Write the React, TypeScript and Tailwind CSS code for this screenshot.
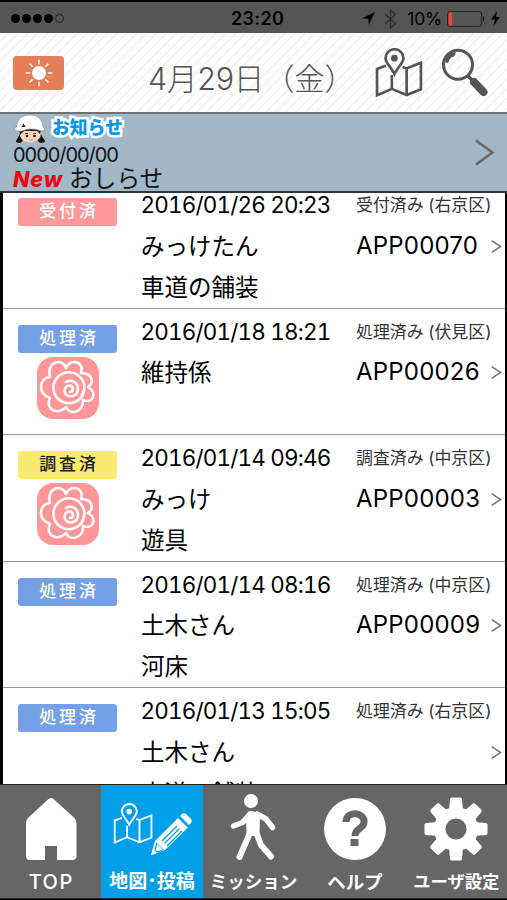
import React from 'react';

type Row = {
  tag: string;
  tone: 'pink' | 'blue' | 'yellow';
  date: string;
  name: string;
  kind?: string;
  state: string;
  code?: string;
  flower?: boolean;
};

const rows: Row[] = [
  { tag: '受付済', tone: 'pink', date: '2016/01/26 20:23', name: 'みっけたん', kind: '車道の舗装', state: '受付済み (右京区)', code: 'APP00070' },
  { tag: '処理済', tone: 'blue', date: '2016/01/18 18:21', name: '維持係', state: '処理済み (伏見区)', code: 'APP00026', flower: true },
  { tag: '調査済', tone: 'yellow', date: '2016/01/14 09:46', name: 'みっけ', kind: '遊具', state: '調査済み (中京区)', code: 'APP00003', flower: true },
  { tag: '処理済', tone: 'blue', date: '2016/01/14 08:16', name: '土木さん', kind: '河床', state: '処理済み (中京区)', code: 'APP00009' },
  { tag: '処理済', tone: 'blue', date: '2016/01/13 15:05', name: '土木さん', kind: '車道の舗装', state: '処理済み (右京区)' },
];

const tones = {
  pink: 'bg-[#ff999b] text-white',
  blue: 'bg-[#74a0e6] text-white',
  yellow: 'bg-[#f9ea70] text-[#222]',
};

function StatusBar() {
  return (
    <div className="flex h-[33px] shrink-0 items-center border-t-2 border-black bg-[#555] pl-[11px] pr-[7px] pt-[2px] text-black">
      <div className="flex w-[220px] gap-[2px]">
        {[0, 1, 2, 3].map((i) => (
          <span key={i} className="size-[9px] rounded-full bg-black" />
        ))}
        <span className="size-[9px] rounded-full border border-[#222]" />
      </div>
      <span className="text-[18px] font-semibold leading-[20px] tracking-[0.35px]">23:20</span>
      <div className="ml-auto flex items-center">
        <svg width="13" height="13" viewBox="0 0 13 13">
          <path d="M13 0 6.8 13 6.3 6.8 0 6.2Z" fill="#000" />
        </svg>
        <svg className="ml-[9px]" width="13" height="20" viewBox="0 0 13 20">
          <path d="M1 5 11.5 14.5 6.5 19V1L11.5 5.5 1 15" fill="none" stroke="#2c2c2c" strokeWidth="1.2" />
        </svg>
        <span className="ml-[10px] text-[17.500px] leading-[20px] tracking-[-0.2px]">10%</span>
        <svg className="ml-[5px]" width="39" height="16" viewBox="0 0 39 16">
          <rect x=".6" y=".6" width="34" height="14.8" rx="2.5" fill="none" stroke="#222" />
          <rect x="1.600" y="1.600" width="3.600" height="12.800" rx="1" fill="#f0453a" />
          <path d="M36 5q2.500 3 0 6Z" fill="#000" />
        </svg>
        <svg className="ml-[5px]" width="9" height="15" viewBox="0 0 9 15">
          <path d="M6 0 0 8.500h4L2.500 15 9 6H5Z" fill="#000" />
        </svg>
      </div>
    </div>
  );
}

function MapIcon({ className, width }: { className?: string; width: number }) {
  return (
    <svg className={className} viewBox="0 0 48 48" fill="none" stroke="currentColor" strokeWidth={width}>
      <path d="M10.500 17.500 2 20.500v25.800L16.500 40 31 46l14-5.500V14.500L31 20l-4-1.500M31 20v26M16.500 26.500V40" />
      <path d="M19 25.500C16 19 10.300 14.500 10.300 10a8.800 8.800 0 0 1 17.600 0c0 4.500-5.900 9-8.900 15.500Z" />
      <circle cx="19" cy="10" r="3.300" fill="currentColor" stroke="none" />
    </svg>
  );
}

function Header() {
  return (
    <header className="flex h-[79px] shrink-0 items-start bg-[repeating-linear-gradient(135deg,#fff_0px,#fff_5px,#f1f1f1_5.500px,#f1f1f1_6.300px,#fff_7px)] pl-[13px] text-[#555]">
      <div className="mt-[23px] flex h-[34px] w-[51px] items-center justify-center rounded-[4px] bg-[#e47e58]">
        <svg width="28" height="28" viewBox="-14 -14 28 28" stroke="#fff" strokeWidth="1.500">
          <circle r="7" fill="#fff" stroke="none" />
          {[0, 45, 90, 135, 180, 225, 270, 315].map((a) => (
            <path key={a} d="M0-8.800V-13.200" transform={`rotate(${a})`} />
          ))}
        </svg>
      </div>
      <h1 className="ml-[84px] mt-[24px] w-[213px] whitespace-nowrap text-[30.500px] font-light leading-[44px] tracking-[-0.250px]">4月29日（金）</h1>
      <MapIcon className="ml-[14px] mt-[15px] size-[49px]" width={2.6} />
      <svg className="ml-[17px] mt-[15px]" width="48" height="49" viewBox="0 0 48 49">
        <circle cx="17" cy="16.800" r="14.500" fill="none" stroke="#555" strokeWidth="3" />
        <path d="M4 14Q6 5 15 4q-1 5-5 5.500Q8 12 7 15Z" fill="#555" />
        <path d="m27 28 5 5" stroke="#555" strokeWidth="3.500" />
        <path d="m33 34 9.500 10" stroke="#555" strokeWidth="8" strokeLinecap="round" />
      </svg>
    </header>
  );
}

function Helmet() {
  return (
    <svg width="34" height="30" viewBox="0 0 34 30">
      <path d="M8 16C6 24 3 25 3 28q6 3 7-3ZM27 16c1 8 5 8 5 12q-7 3-8-4Z" fill="#191716" />
      <path d="M7 15h20q3 9-4 12-6 3-12 0-6-4-4-12Z" fill="#fbd7bb" />
      <path d="M6 15h22l-1 5-3-3H11l-4 4Z" fill="#30231d" />
      <path d="M12 19.500h3M20 19.500h3" stroke="#543" strokeWidth="1" />
      <circle cx="14" cy="22" r="1.300" fill="#211" />
      <circle cx="21.500" cy="22" r="1.300" fill="#211" />
      <path d="M16 25.500q2 1 4 0" stroke="#b66" strokeWidth=".8" fill="none" />
      <path d="M1 15Q4 14 4 10 6 1 17 1q12 0 13 12l2 3-4 1q-10-4-19 0-5 1-8-2Z" fill="#fff" stroke="#777" strokeWidth=".5" />
      <path d="m10.500 9.500-2 3.500h4Z" fill="#222" />
    </svg>
  );
}

function Notice() {
  return (
    <section className="flex h-[81px] shrink-0 items-center justify-between border-b-2 border-t-2 border-b-[#303338] border-t-[#6f7275] bg-[#a2b8c7] pr-[12px]">
      <div className="flex h-full flex-col pl-[13px] text-[#101418]">
        <div className="flex h-[29.500px] items-start">
          <Helmet />
          <strong className="ml-[5px] text-[17.800px] font-black leading-[27px] text-[#0798e8] [paint-order:stroke_fill] [-webkit-text-stroke:5px_white]">お知らせ</strong>
        </div>
        <span className="text-[20px] leading-[22px] tracking-[-1.050px]">0000/00/00</span>
        <div className="flex items-baseline whitespace-nowrap leading-[26px]">
          <b className="w-[50px] text-[21.500px] font-extrabold italic tracking-[0.900px] text-[#f00612]">New</b>
          <span className="ml-[6px] text-[23.700px]">おしらせ</span>
        </div>
      </div>
      <svg width="20" height="27" viewBox="0 0 20 27" fill="none" stroke="#666" strokeWidth="2.500">
        <path d="m1 1.500 16.500 12L1 25.500" />
      </svg>
    </section>
  );
}

function Flower() {
  return (
    <svg className="ml-[19px] mt-[4px]" width="62" height="62" viewBox="0 0 62 62" fill="none" stroke="#fff" strokeWidth="2.500" strokeLinecap="round" strokeLinejoin="round">
      <rect width="62" height="62" rx="16" fill="#ff9799" stroke="none" />
      <path d="M13 20C9 5 25 0 29 11 33 1 48 4 44 16 56 16 57 26 51 30 61 36 56 47 46 43 47 55 33 59 29 50 23 58 7 54 13 41 1 38 1 21 13 20Z" />
      <path d="M46.500 36A15.500 15.500 0 1 1 44 21C49 27 48 35 44 40" />
      <path d="M33 35C37 35 37 29 33 28.500 28 28 26 34 29 37.500 34 42 41 38 41 32 41 25 34 22 29 25" />
    </svg>
  );
}

function ListRow({ row, last }: { row: Row; last: boolean }) {
  return (
    <li className={`flex h-[126.500px] shrink-0 ${last ? '' : 'border-b border-[#999]'}`}>
      <div className="w-[138px] shrink-0 pl-[15px] pt-[16px]">
        <div className={`flex h-[28px] w-[99px] items-center justify-center rounded-[3px] pl-[3px] text-[17px] font-medium tracking-[2.800px] ${tones[row.tone]}`}>{row.tag}</div>
        {row.flower && <Flower />}
      </div>
      <div className="w-[215px] shrink-0 whitespace-nowrap pt-[3px] text-[23.500px] leading-[41px]">
        <p className="-ml-[0.500px] text-[22.500px] leading-[40.500px] tabular-nums tracking-[-0.830px]">{row.date}</p>
        <p>{row.name}</p>
        <p>{row.kind}</p>
      </div>
      <div className="flex-1 whitespace-nowrap pt-[3px] leading-[40.500px]">
        <p className="text-[16.900px] text-[#333]">{row.state}</p>
        <div className="flex h-[41px] items-center">
          <span className="w-[135px] text-[24px] tracking-[0.200px]">{row.code}</span>
          <svg width="11" height="13" viewBox="0 0 11 13" fill="none" stroke="#777" strokeWidth="1.500">
            <path d="m.7.7 9 5.800-9 5.800" />
          </svg>
        </div>
      </div>
    </li>
  );
}

const white = '#fff';

function HomeIcon() {
  return (
    <svg width="52" height="62" viewBox="0 0 52 62">
      <path d="M23.500 1q2.500-1.800 5 0L49.500 20q2 2 2 5v33q0 4-4 4H32V48H20v14H5q-4 0-4-4V25q0-3 2-5Z" fill={white} />
    </svg>
  );
}

function PencilIcon() {
  return (
    <svg width="42" height="43" viewBox="0 0 42 43">
      <path d="M1 42 5 28 28.500 4.500 38.500 14 15 37Z" fill={white} />
      <path d="m30 3 2-2q2-1.500 4 0l5 5q1.500 2 0 4l-2 2Z" fill={white} />
      <path d="M6.500 29.500 4 38l2 2 8-3Z" fill="#00a0e9" />
      <path d="M7.500 31 5.500 37.500l1.500 1 5.500-2Z" fill={white} />
      <path d="M1 42 3 36l4 4Z" fill={white} />
      <path d="m12 28 15-15M14.500 30.500l15-15M17 33l15-15M28.500 4.500l10 10" stroke="#00a0e9" strokeWidth="1.300" />
    </svg>
  );
}

function WalkIcon() {
  return (
    <svg className="mb-[3px] mr-[2px]" width="46" height="68" viewBox="0 0 46 68" fill="none" stroke={white} strokeLinecap="round" strokeLinejoin="round">
      <circle cx="21" cy="7" r="7" fill={white} stroke="none" />
      <path d="M22 20 19 23 19.500 39 26.500 39 27 22Z" fill={white} strokeWidth="6" />
      <path d="M20 20 12.500 28.500 3.500 32M27 20l9 5 6.500 8.500" strokeWidth="5.500" />
      <path d="M19.500 40 9.500 63M26.500 39 31 51 41 62.500" strokeWidth="6" />
    </svg>
  );
}

function HelpIcon() {
  return (
    <svg width="62" height="62" viewBox="0 0 62 62">
      <circle cx="31" cy="31" r="31" fill={white} />
      <path d="M22 24c0-12 19-10 18 0 0 7-9 6-9 14" fill="none" stroke="#666" strokeWidth="7" />
      <path d="M26.500 41h8v7h-8Z" fill="#666" />
    </svg>
  );
}

function GearIcon() {
  return (
    <svg width="64" height="64" viewBox="-32 -32 64 64">
      <circle r="22" fill={white} />
      {[0, 45, 90, 135, 180, 225, 270, 315].map((a) => (
        <path key={a} d="M-7-18-6-30q.2-1.500 2-1.500h8q1.800 0 2 1.500L7-18Z" fill={white} transform={`rotate(${a})`} />
      ))}
      <circle r="10.500" fill="#666" />
    </svg>
  );
}

function Tab({ label, text, active, children }: { label: string; text: string; active?: boolean; children: React.ReactNode }) {
  return (
    <button className={`flex min-w-0 flex-1 flex-col items-center ${active ? 'bg-[#00a0e9]' : ''}`}>
      <span className="flex h-[86px] items-center pt-[2px]">{children}</span>
      <span className={`whitespace-nowrap leading-[22px] ${text}`}>{label}</span>
    </button>
  );
}

export default function App() {
  return (
    <main className="flex h-[900px] w-[507px] flex-col overflow-hidden bg-black font-[Inter,'Noto_Sans_CJK_JP',sans-serif] text-black">
      <StatusBar />
      <Header />
      <Notice />
      <div className="ml-[3px] mr-[2px] h-[591px] shrink-0 overflow-hidden bg-white">
        <ul className="-mt-[11px]">
          {rows.map((row, i) => (
            <ListRow key={row.date} row={row} last={i === rows.length - 1} />
          ))}
        </ul>
      </div>
      <nav className="flex h-[115px] shrink-0 border-b border-t border-[#222] bg-[#666] text-white">
        <Tab label="TOP" text="text-[20px] tracking-[1.500px] pl-[1px] font-medium"><HomeIcon /></Tab>
        <Tab label="地図･投稿" text="text-[19px] font-bold" active>
          <span className="flex items-start">
            <MapIcon className="size-[41px]" width={2.2} />
            <span className="-ml-[4px] mt-[10px]"><PencilIcon /></span>
          </span>
        </Tab>
        <Tab label="ミッション" text="text-[17.500px] font-bold"><WalkIcon /></Tab>
        <Tab label="ヘルプ" text="text-[18.500px] font-bold"><HelpIcon /></Tab>
        <Tab label="ユーザ設定" text="text-[17.300px] font-bold"><GearIcon /></Tab>
      </nav>
    </main>
  );
}
